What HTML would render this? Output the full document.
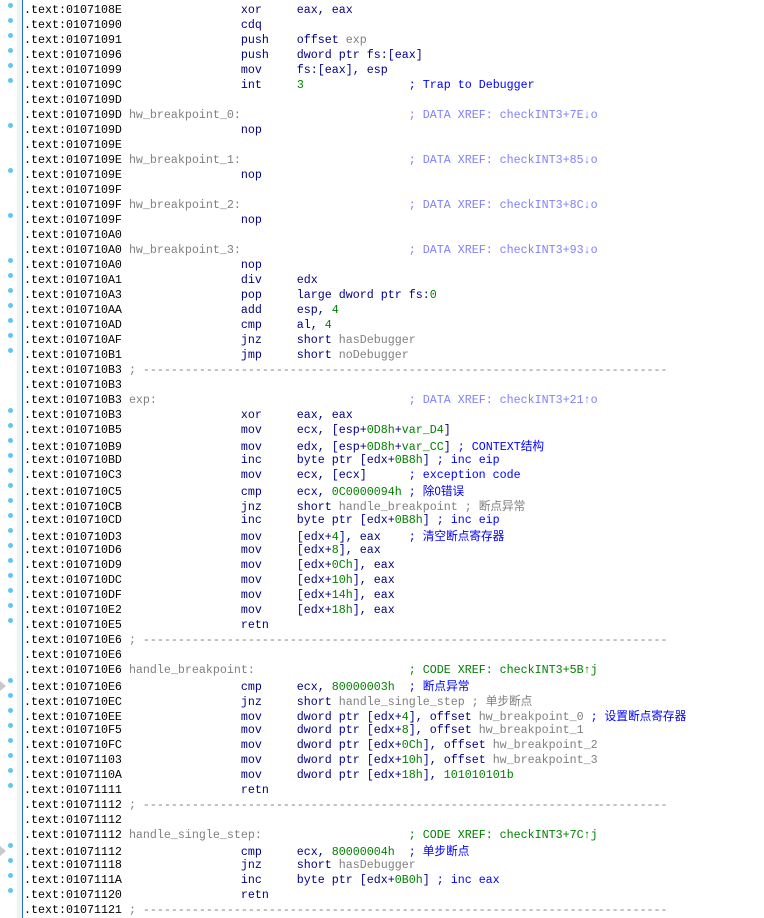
<!DOCTYPE html>
<html><head><meta charset="utf-8"><style>
html,body{margin:0;padding:0;background:#fff;width:764px;height:918px;overflow:hidden}
body{position:relative;font-family:"Liberation Mono","Noto Sans CJK SC",monospace;font-size:11.67px;color:#000}
.band{position:absolute;left:17px;top:0;width:5px;height:918px;background:#f2f2f2}
.vl{position:absolute;left:22px;top:0;width:1px;height:918px;background:#1c6fd0}
#c{position:absolute;left:24px;top:3px}
.l{height:15px;line-height:15px;white-space:pre;position:relative}
.d::before{content:"";position:absolute;left:-16px;top:0;width:5px;height:5px;border-radius:50%;background:#5ec6f4}
.a::after{content:"";position:absolute;left:-24px;top:3px;border-left:6px solid #c8c8c8;border-top:5px solid transparent;border-bottom:5px solid transparent}
.m{color:#000080}.n{color:#008000}.g{color:#808080}.c{color:#0000ff}.x{color:#8080ff}.s{color:#808080}.cx{color:#008000}
.cj{font-family:"Noto Sans CJK SC",sans-serif}
</style></head><body>
<div class="band"></div><div class="vl"></div>
<div id="c">
<div class="l d">.text:0107108E                 <span class="m">xor     eax, eax</span></div>
<div class="l d">.text:01071090                 <span class="m">cdq</span></div>
<div class="l d">.text:01071091                 <span class="m">push    offset </span><span class="g">exp</span></div>
<div class="l d">.text:01071096                 <span class="m">push    dword ptr fs:[eax]</span></div>
<div class="l d">.text:01071099                 <span class="m">mov     fs:[eax], esp</span></div>
<div class="l d">.text:0107109C                 <span class="m">int     </span><span class="n">3</span>               <span class="c">; Trap to Debugger</span></div>
<div class="l">.text:0107109D</div>
<div class="l">.text:0107109D <span class="g">hw_breakpoint_0:</span>                        <span class="x">; DATA XREF: checkINT3+7E↓o</span></div>
<div class="l d">.text:0107109D                 <span class="m">nop</span></div>
<div class="l">.text:0107109E</div>
<div class="l">.text:0107109E <span class="g">hw_breakpoint_1:</span>                        <span class="x">; DATA XREF: checkINT3+85↓o</span></div>
<div class="l d">.text:0107109E                 <span class="m">nop</span></div>
<div class="l">.text:0107109F</div>
<div class="l">.text:0107109F <span class="g">hw_breakpoint_2:</span>                        <span class="x">; DATA XREF: checkINT3+8C↓o</span></div>
<div class="l d">.text:0107109F                 <span class="m">nop</span></div>
<div class="l">.text:010710A0</div>
<div class="l">.text:010710A0 <span class="g">hw_breakpoint_3:</span>                        <span class="x">; DATA XREF: checkINT3+93↓o</span></div>
<div class="l d">.text:010710A0                 <span class="m">nop</span></div>
<div class="l d">.text:010710A1                 <span class="m">div     edx</span></div>
<div class="l d">.text:010710A3                 <span class="m">pop     large dword ptr fs:</span><span class="n">0</span></div>
<div class="l d">.text:010710AA                 <span class="m">add     esp, </span><span class="n">4</span></div>
<div class="l d">.text:010710AD                 <span class="m">cmp     al, </span><span class="n">4</span></div>
<div class="l d">.text:010710AF                 <span class="m">jnz     short </span><span class="g">hasDebugger</span></div>
<div class="l d">.text:010710B1                 <span class="m">jmp     short </span><span class="g">noDebugger</span></div>
<div class="l">.text:010710B3 <span class="s">; ---------------------------------------------------------------------------</span></div>
<div class="l">.text:010710B3</div>
<div class="l">.text:010710B3 <span class="g">exp:</span>                                    <span class="x">; DATA XREF: checkINT3+21↑o</span></div>
<div class="l d">.text:010710B3                 <span class="m">xor     eax, eax</span></div>
<div class="l d">.text:010710B5                 <span class="m">mov     ecx, [esp+</span><span class="n">0D8h</span><span class="m">+</span><span class="n">var_D4</span><span class="m">]</span></div>
<div class="l d">.text:010710B9                 <span class="m">mov     edx, [esp+</span><span class="n">0D8h</span><span class="m">+</span><span class="n">var_CC</span><span class="m">] </span><span class="c">; CONTEXT<span class="cj">结构</span></span></div>
<div class="l d">.text:010710BD                 <span class="m">inc     byte ptr [edx+</span><span class="n">0B8h</span><span class="m">] </span><span class="c">; inc eip</span></div>
<div class="l d">.text:010710C3                 <span class="m">mov     ecx, [ecx]      </span><span class="c">; exception code</span></div>
<div class="l d">.text:010710C5                 <span class="m">cmp     ecx, </span><span class="n">0C0000094h</span><span class="m"> </span><span class="c">; <span class="cj">除0错误</span></span></div>
<div class="l d">.text:010710CB                 <span class="m">jnz     short </span><span class="g">handle_breakpoint ; <span class="cj">断点异常</span></span></div>
<div class="l d">.text:010710CD                 <span class="m">inc     byte ptr [edx+</span><span class="n">0B8h</span><span class="m">] </span><span class="c">; inc eip</span></div>
<div class="l d">.text:010710D3                 <span class="m">mov     [edx+</span><span class="n">4</span><span class="m">], eax    </span><span class="c">; <span class="cj">清空断点寄存器</span></span></div>
<div class="l d">.text:010710D6                 <span class="m">mov     [edx+</span><span class="n">8</span><span class="m">], eax</span></div>
<div class="l d">.text:010710D9                 <span class="m">mov     [edx+</span><span class="n">0Ch</span><span class="m">], eax</span></div>
<div class="l d">.text:010710DC                 <span class="m">mov     [edx+</span><span class="n">10h</span><span class="m">], eax</span></div>
<div class="l d">.text:010710DF                 <span class="m">mov     [edx+</span><span class="n">14h</span><span class="m">], eax</span></div>
<div class="l d">.text:010710E2                 <span class="m">mov     [edx+</span><span class="n">18h</span><span class="m">], eax</span></div>
<div class="l d">.text:010710E5                 <span class="m">retn</span></div>
<div class="l">.text:010710E6 <span class="s">; ---------------------------------------------------------------------------</span></div>
<div class="l">.text:010710E6</div>
<div class="l">.text:010710E6 <span class="g">handle_breakpoint:</span>                      <span class="cx">; CODE XREF: checkINT3+5B↑j</span></div>
<div class="l d a">.text:010710E6                 <span class="m">cmp     ecx, </span><span class="n">80000003h</span><span class="m">  </span><span class="c">; <span class="cj">断点异常</span></span></div>
<div class="l d">.text:010710EC                 <span class="m">jnz     short </span><span class="g">handle_single_step ; <span class="cj">单步断点</span></span></div>
<div class="l d">.text:010710EE                 <span class="m">mov     dword ptr [edx+</span><span class="n">4</span><span class="m">], offset </span><span class="g">hw_breakpoint_0</span><span class="m"> </span><span class="c">; <span class="cj">设置断点寄存器</span></span></div>
<div class="l d">.text:010710F5                 <span class="m">mov     dword ptr [edx+</span><span class="n">8</span><span class="m">], offset </span><span class="g">hw_breakpoint_1</span></div>
<div class="l d">.text:010710FC                 <span class="m">mov     dword ptr [edx+</span><span class="n">0Ch</span><span class="m">], offset </span><span class="g">hw_breakpoint_2</span></div>
<div class="l d">.text:01071103                 <span class="m">mov     dword ptr [edx+</span><span class="n">10h</span><span class="m">], offset </span><span class="g">hw_breakpoint_3</span></div>
<div class="l d">.text:0107110A                 <span class="m">mov     dword ptr [edx+</span><span class="n">18h</span><span class="m">], </span><span class="n">101010101b</span></div>
<div class="l d">.text:01071111                 <span class="m">retn</span></div>
<div class="l">.text:01071112 <span class="s">; ---------------------------------------------------------------------------</span></div>
<div class="l">.text:01071112</div>
<div class="l">.text:01071112 <span class="g">handle_single_step:</span>                     <span class="cx">; CODE XREF: checkINT3+7C↑j</span></div>
<div class="l d a">.text:01071112                 <span class="m">cmp     ecx, </span><span class="n">80000004h</span><span class="m">  </span><span class="c">; <span class="cj">单步断点</span></span></div>
<div class="l d">.text:01071118                 <span class="m">jnz     short </span><span class="g">hasDebugger</span></div>
<div class="l d">.text:0107111A                 <span class="m">inc     byte ptr [edx+</span><span class="n">0B0h</span><span class="m">] </span><span class="c">; inc eax</span></div>
<div class="l d">.text:01071120                 <span class="m">retn</span></div>
<div class="l">.text:01071121 <span class="s">; ---------------------------------------------------------------------------</span></div>
</div>
</body></html>
